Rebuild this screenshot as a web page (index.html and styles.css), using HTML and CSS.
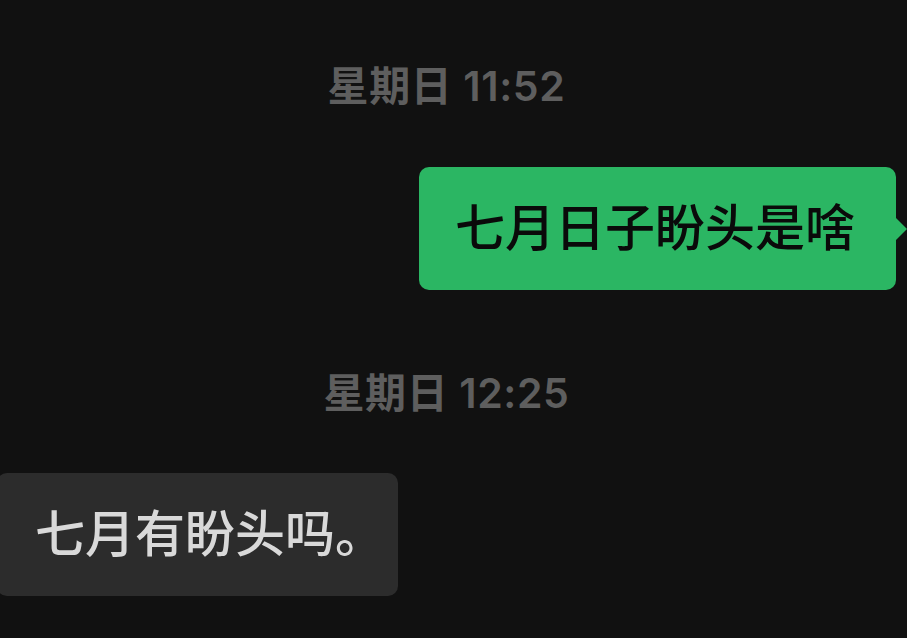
FILE: index.html
```html
<!DOCTYPE html>
<html lang="zh-CN">
<head>
<meta charset="utf-8">
<title>聊天</title>
<link rel="stylesheet" href="styles.css">
</head>
<body>
<main class="chat">
  <div class="time time-first">星期日 11:52</div>
  <div class="row row-out">
    <div class="bubble bubble-out">七月日子盼头是啥</div>
  </div>
  <div class="time time-second">星期日 12:25</div>
  <div class="row row-in">
    <div class="bubble bubble-in">七月有盼头吗。</div>
  </div>
</main>
</body>
</html>
```
FILE: styles.css
```css
html, body {
  margin: 0;
  padding: 0;
  background: #111111;
  height: 100%;
  overflow: hidden;
}

.chat {
  display: flex;
  flex-direction: column;
  font-family: "Noto Sans CJK SC", "Noto Sans", sans-serif;
}

.time {
  align-self: center;
  margin-right: 14px;
  font-family: "Inter", "Noto Sans CJK SC", sans-serif;
  font-size: 41px;
  line-height: 40px;
  letter-spacing: 0.6px;
  font-weight: 600;
  color: #5e5e5e;
}

.time-first {
  margin-top: 66px;
}

.time-second {
  margin-top: 83px;
}

.row {
  display: flex;
}

.row-out {
  justify-content: flex-end;
  margin-top: 61px;
  padding-right: 11px;
}

.row-in {
  justify-content: flex-start;
  margin-top: 60px;
}

.bubble {
  position: relative;
  font-size: 50px;
  line-height: 60px;
  font-weight: 500;
  padding: 27px 38px 36px;
  border-radius: 10px;
}

.bubble-out {
  background: #2bb663;
  color: #0a0a0a;
  padding-left: 36px;
  padding-right: 41px;
}

.bubble-out::after {
  content: "";
  position: absolute;
  right: -11px;
  top: 50px;
  border-style: solid;
  border-width: 12px 0 12px 12px;
  border-color: transparent transparent transparent #2bb663;
}

.bubble-in {
  background: #2c2c2c;
  color: #d9d9d9;
  margin-left: -3px;
  padding-right: 13px;
}
```
